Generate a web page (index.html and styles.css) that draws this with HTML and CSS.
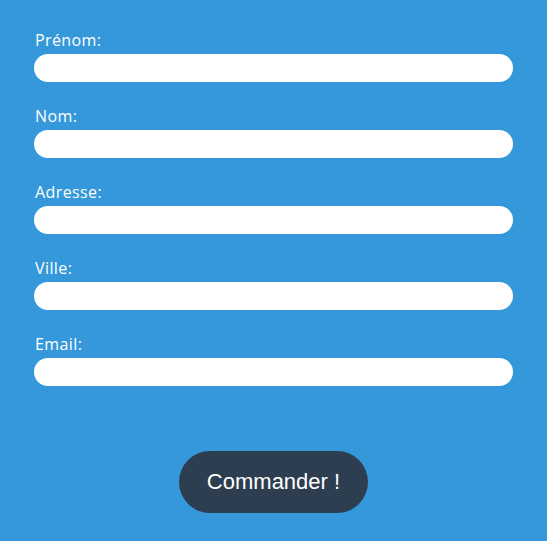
FILE: index.html
```html
<!DOCTYPE html>
<html lang="fr">
<head>
<meta charset="utf-8">
<title>Commande</title>
<link rel="stylesheet" href="styles.css">
</head>
<body>
<form class="order-form">
  <div class="field">
    <label class="field-label" for="prenom">Prénom:</label>
    <input class="field-input" id="prenom" type="text">
  </div>
  <div class="field">
    <label class="field-label" for="nom">Nom:</label>
    <input class="field-input" id="nom" type="text">
  </div>
  <div class="field">
    <label class="field-label" for="adresse">Adresse:</label>
    <input class="field-input" id="adresse" type="text">
  </div>
  <div class="field">
    <label class="field-label" for="ville">Ville:</label>
    <input class="field-input" id="ville" type="text">
  </div>
  <div class="field">
    <label class="field-label" for="email">Email:</label>
    <input class="field-input" id="email" type="email">
  </div>
  <div class="actions">
    <button class="submit" type="button">Commander !</button>
  </div>
</form>
</body>
</html>
```
FILE: styles.css
```css
html, body {
  margin: 0;
  padding: 0;
  background: #3498db;
  height: 100%;
}
.order-form {
  padding: 33px 34px 0;
  display: flex;
  flex-direction: column;
}
.field {
  display: flex;
  flex-direction: column;
  margin-bottom: 27px;
}
.field-label {
  font-family: "Open Sans", "Liberation Sans", sans-serif;
  font-size: 16px;
  line-height: 15px;
  letter-spacing: 0.4px;
  color: #ffffff;
  padding-left: 1px;
  margin-bottom: 6px;
}
.field-input {
  box-sizing: border-box;
  height: 28px;
  width: 100%;
  border: none;
  border-radius: 14px;
  background: #ffffff;
  margin: 0;
  padding: 0 12px;
  outline: none;
}
.actions {
  display: flex;
  justify-content: center;
  margin-top: 38px;
}
.submit {
  box-sizing: border-box;
  width: 189px;
  height: 62px;
  border: none;
  border-radius: 31px;
  background: #2c3e50;
  color: #ffffff;
  font-family: "Liberation Sans", Arial, sans-serif;
  font-size: 22px;
  padding: 0;
  cursor: pointer;
}
```
